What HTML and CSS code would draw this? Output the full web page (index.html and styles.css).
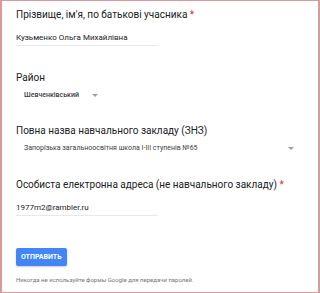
FILE: index.html
```html
<!doctype html>
<html>
<head>
    <meta charset="utf-8" />
    <title>Форма</title>
    <link rel="stylesheet" href="styles.css">
</head>
<body>
<div class="form">
    <div class="question question--name">
        <div class="question__title">Прізвище, ім'я, по батькові учасника <span class="required">*</span></div>
        <div class="question__text">Кузьменко Ольга Михайлівна</div>
    </div>
    <div class="question question--district">
        <div class="question__title">Район</div>
        <div class="select select--short">
            <span class="select__value">Шевченківський</span>
            <span class="select__arrow"></span>
        </div>
    </div>
    <div class="question question--school">
        <div class="question__title">Повна назва навчального закладу (ЗНЗ)</div>
        <div class="select select--long">
            <span class="select__value">Запорізька загальноосвітня школа I-III ступенів №65</span>
            <span class="select__arrow"></span>
        </div>
    </div>
    <div class="question question--email">
        <div class="question__title">Особиста електронна адреса (не навчального закладу) <span class="required">*</span></div>
        <div class="question__text">1977m2@rambler.ru</div>
    </div>
    <div class="submit">
        <button class="submit__button">Отправить</button>
    </div>
    <div class="notice">Никогда не используйте формы Google для передачи паролей.</div>
</div>
</body>
</html>
```

FILE: styles.css
```css
html, body {
    margin: 0;
    padding: 0;
}
body {
    width: 320px;
    height: 293px;
    background-color: #fff;
    font-family: Roboto, "Liberation Sans", sans-serif;
    color: #202124;
}
.form {
    box-sizing: border-box;
    width: 320px;
    height: 293px;
    border: 1px solid #d99a9a;
    border-left-width: 2px;
    border-right-width: 2px;
    padding: 7px 14px 0;
}
.question__title {
    font-size: 10px;
    line-height: 14px;
    white-space: nowrap;
    color: #202124;
}
.required {
    color: #d93025;
}
.question__text {
    width: 142px;
    margin-top: 10px;
    font-size: 8px;
    line-height: 12px;
    padding-bottom: 1px;
    border-bottom: 1px solid #e8e8e8;
    color: #202124;
}
.question--name {
    margin-bottom: 25px;
}
.question--district {
    margin-bottom: 21px;
}
.question--school {
    margin-bottom: 22px;
}
.select {
    display: flex;
    align-items: center;
    justify-content: space-between;
    height: 16px;
    padding-left: 8px;
    margin-top: 2px;
}
.select__value {
    font-size: 7px;
    font-weight: 500;
    color: #3c4043;
}
.select--short {
    width: 74px;
}
.select--long {
    width: 270px;
}
.select--long .select__value {
    font-weight: 400;
}
.select__arrow {
    width: 0;
    height: 0;
    border-left: 3px solid transparent;
    border-right: 3px solid transparent;
    border-top: 3px solid #9e9e9e;
}
.submit {
    margin-top: 32px;
}
.submit__button {
    display: block;
    border: none;
    border-radius: 2px;
    background-color: #4285f4;
    color: #fff;
    font-family: Roboto, "Liberation Sans", sans-serif;
    font-size: 7px;
    font-weight: 700;
    text-transform: uppercase;
    height: 18px;
    padding: 0 5px;
    box-shadow: 0 1px 2px rgba(0, 0, 0, 0.2);
}
.notice {
    margin-top: 9px;
    font-size: 6px;
    line-height: 10px;
    color: #757575;
}
```
